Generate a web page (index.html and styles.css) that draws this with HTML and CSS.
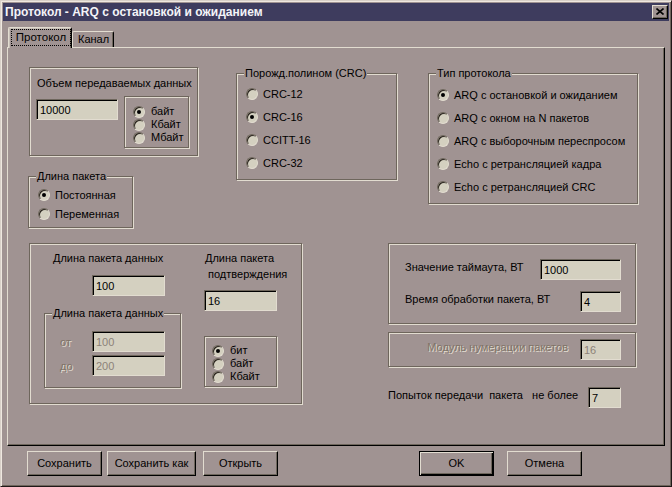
FILE: index.html
```html
<!DOCTYPE html>
<html>
<head>
<meta charset="utf-8">
<link rel="stylesheet" href="styles.css">
</head>
<body>
<div class="window">
  <div class="titlebar">
    <span class="title">Протокол - ARQ с остановкой и ожиданием</span>
    <span class="close"><svg width="8" height="7" viewBox="0 0 8 7"><path d="M0.5 0.5 L7.5 6.5 M7.5 0.5 L0.5 6.5" stroke="#000" stroke-width="1.6" fill="none"/></svg></span>
  </div>
  <div class="tabs">
    <div class="tab active"><span class="focus">Протокол</span></div>
    <div class="tab">Канал</div>
  </div>
  <div class="panel">
    <div class="row1">
      <div class="colA">
        <div class="group g1">
          <div class="g1-label">Объем передаваемых данных</div>
          <div class="g1-row">
            <div class="field f-vol">10000</div>
            <div class="group rbox rb1">
              <div class="rrow"><span class="radio on"></span><span>байт</span></div>
              <div class="rrow"><span class="radio"></span><span>Кбайт</span></div>
              <div class="rrow"><span class="radio"></span><span>Мбайт</span></div>
            </div>
          </div>
        </div>
        <div class="group g2">
          <span class="legend">Длина пакета</span>
          <div class="opt o19"><span class="radio on"></span><span>Постоянная</span></div>
          <div class="opt o19"><span class="radio"></span><span>Переменная</span></div>
        </div>
      </div>
      <div class="group g3">
        <span class="legend">Порожд.полином (CRC)</span>
        <div class="opt o23"><span class="radio"></span><span>CRC-12</span></div>
        <div class="opt o23"><span class="radio on"></span><span>CRC-16</span></div>
        <div class="opt o23"><span class="radio"></span><span>CCITT-16</span></div>
        <div class="opt o23"><span class="radio"></span><span>CRC-32</span></div>
      </div>
      <div class="group g4">
        <span class="legend">Тип протокола</span>
        <div class="opt o23"><span class="radio on"></span><span>ARQ с остановкой и ожиданием</span></div>
        <div class="opt o23"><span class="radio"></span><span>ARQ с окном на N пакетов</span></div>
        <div class="opt o23"><span class="radio"></span><span>ARQ с выборочным переспросом</span></div>
        <div class="opt o23"><span class="radio"></span><span>Echo с ретрансляцией кадра</span></div>
        <div class="opt o23"><span class="radio"></span><span>Echo с ретрансляцией CRC</span></div>
      </div>
    </div>
    <div class="row2">
      <div class="group g5">
        <div class="g5-left">
          <div class="g5-label">Длина пакета данных</div>
          <div class="field f-len">100</div>
          <div class="group g5-inner">
            <span class="legend">Длина пакета данных</span>
            <div class="range-row r-first"><span class="dis-label">от</span><div class="field f-len dis">100</div></div>
            <div class="range-row r-second"><span class="dis-label">до</span><div class="field f-len dis">200</div></div>
          </div>
        </div>
        <div class="g5-right">
          <div class="ack1">Длина пакета</div>
          <div class="ack2">подтверждения</div>
          <div class="field f-ack">16</div>
          <div class="group rbox rb2">
            <div class="rrow"><span class="radio on"></span><span>бит</span></div>
            <div class="rrow"><span class="radio"></span><span>байт</span></div>
            <div class="rrow"><span class="radio"></span><span>Кбайт</span></div>
          </div>
        </div>
      </div>
      <div class="colR">
        <div class="group g6">
          <div class="frow fr1"><span class="flabel">Значение таймаута, ВТ</span><div class="field f-timeout">1000</div></div>
          <div class="frow fr2"><span class="flabel">Время обработки пакета, ВТ</span><div class="field f-small">4</div></div>
        </div>
        <div class="group g7">
          <div class="frow fr3"><span class="flabel dis-text">Модуль нумерации пакетов</span><div class="field f-small dis">16</div></div>
        </div>
        <div class="frow fr4"><span class="flabel plain">Попыток передачи&nbsp; пакета &nbsp;&nbsp;не более</span><div class="field f-tries">7</div></div>
      </div>
    </div>
  </div>
  <div class="buttons">
    <div class="btn b-save">Сохранить</div>
    <div class="btn b-saveas">Сохранить как</div>
    <div class="btn b-open">Открыть</div>
    <div class="btn default b-ok">OK</div>
    <div class="btn b-cancel">Отмена</div>
  </div>
</div>
</body>
</html>
```
FILE: styles.css
```css
:root {
  --bg: #a09392;
  --light: #e2dcd0;
  --dark: #6e665c;
  --field: #d4d0c0;
}
* { box-sizing: border-box; }
html, body { margin: 0; padding: 0; background: var(--bg); }
body {
  font-family: "Liberation Sans", Arial, sans-serif;
  font-size: 11px;
  color: #000;
  width: 672px;
  height: 487px;
  overflow: hidden;
}
.window {
  width: 672px;
  height: 487px;
  background: var(--bg);
  border: 1px solid;
  border-color: #d8d0c8 #201818 #201818 #d8d0c8;
  box-shadow: inset 1px 1px 0 #efe8e0, inset -1px -1px 0 var(--dark);
  padding: 2px;
}
.titlebar {
  height: 18px;
  background: #3e3c5e;
  display: flex;
  align-items: flex-start;
  justify-content: space-between;
}
.title {
  color: #f4f4f8;
  font-weight: bold;
  font-size: 12px;
  line-height: 18px;
  padding-left: 2px;
}
.close {
  width: 16px;
  height: 14px;
  margin-top: 2px;
  margin-right: 1px;
  background: var(--bg);
  border: 1px solid;
  border-color: var(--light) #000 #000 var(--light);
  box-shadow: inset -1px -1px 0 var(--dark);
  display: flex;
  align-items: center;
  justify-content: center;
}
.close svg { display: block; margin-left: -1px; margin-top: -1px; }
.tabs {
  height: 26px;
  display: flex;
  align-items: flex-end;
  padding-left: 5px;
  position: relative;
  z-index: 2;
}
.tab {
  height: 16px;
  width: 42px;
  border-top: 1px solid var(--light);
  border-left: 1px solid var(--light);
  border-right: 1px solid #000;
  box-shadow: inset -1px 0 0 var(--dark);
  border-radius: 2px 2px 0 0;
  line-height: 14px;
  padding-left: 5px;
  font-size: 11px;
  background: var(--bg);
}
.tab.active {
  height: 21px;
  width: 64px;
  margin-bottom: -1px;
  padding: 1px 0 0 2px;
  box-shadow: inset 1px 1px 0 #c8c0b8, inset -1px 0 0 var(--dark);
}
.focus {
  display: block;
  width: 60px;
  height: 17px;
  outline: 1px dotted #000;
  outline-offset: -1px;
  text-align: center;
  line-height: 16px;
  font-size: 11.5px;
}
.panel {
  margin-left: 4px;
  width: 658px;
  height: 399px;
  border: 1px solid;
  border-color: var(--light) #000 #000 var(--light);
  box-shadow: inset -1px -1px 0 var(--dark);
  padding-top: 19px;
  position: relative;
  z-index: 1;
}
.row1 {
  display: flex;
  align-items: flex-start;
  margin-left: 21px;
}
.colA { display: flex; flex-direction: column; align-items: flex-start; }
.group {
  position: relative;
  border: 1px solid var(--dark);
  box-shadow: inset 1px 1px 0 var(--light), 1px 1px 0 var(--light);
}
.legend {
  position: absolute;
  top: -8px;
  left: 7px;
  padding: 0 1px;
  line-height: 14px;
  background: var(--bg);
  white-space: nowrap;
}
.g1 { width: 169px; height: 89px; }
.g1-label { margin: 8px 0 0 7px; line-height: 14px; }
.g1-row { display: flex; align-items: flex-start; margin-top: 6px; margin-left: 6px; }
.f-vol { width: 82px; margin-top: 3px; }
.rbox { padding-left: 8px; }
.rb1 { width: 65px; height: 52px; margin-left: 6px; padding-top: 8px; }
.rrow { display: flex; align-items: center; height: 13px; gap: 6px; line-height: 13px; }
.g2 { width: 105px; height: 52px; margin-top: 20px; margin-left: -1px; padding: 8px 0 0 9px; }
.opt { display: flex; align-items: center; gap: 5px; }
.o19 { height: 19px; }
.o23 { height: 23px; }
.g3 { width: 161px; height: 107px; margin-left: 38px; margin-top: 6px; padding: 8px 0 0 9px; }
.g4 { width: 210px; height: 131px; margin-left: 31px; margin-top: 6px; padding: 9px 0 0 8px; }
.radio {
  flex: none;
  position: relative;
  width: 12px;
  height: 12px;
  border-radius: 50%;
  background: var(--field);
  border: 1px solid;
  border-color: var(--dark) var(--light) var(--light) var(--dark);
  box-shadow: inset 1px 1px 0 #2a241e;
}
.radio.on::after {
  content: "";
  position: absolute;
  left: 3px;
  top: 3px;
  width: 4px;
  height: 4px;
  border-radius: 50%;
  background: #000;
}
.field {
  height: 21px;
  background: var(--field);
  border: 1px solid;
  border-color: var(--dark) var(--light) var(--light) var(--dark);
  box-shadow: inset 1px 1px 0 #000;
  padding-left: 3px;
  padding-top: 1px;
  line-height: 18px;
  white-space: nowrap;
}
.field.dis { color: #8c8278; }
.row2 { display: flex; align-items: flex-start; margin-left: 21px; margin-top: 15px; }
.g5 { width: 273px; height: 161px; display: flex; align-items: flex-start; }
.g5-left { display: flex; flex-direction: column; align-items: flex-start; width: 151px; }
.g5-label { margin: 7px 0 0 23px; line-height: 14px; }
.f-len { width: 73px; }
.g5-left > .f-len { margin: 10px 0 0 62px; }
.g5-inner { width: 137px; height: 75px; margin: 17px 0 0 14px; }
.range-row { display: flex; align-items: center; }
.r-first { margin-top: 17px; }
.r-second { margin-top: 3px; }
.dis-label {
  width: 47px;
  padding-left: 15px;
  color: #807468;
  text-shadow: 1px 1px 0 var(--light);
}
.g5-right { margin-left: 23px; display: flex; flex-direction: column; align-items: flex-start; }
.ack1 { margin-top: 6px; margin-left: 1px; line-height: 16px; }
.ack2 { margin-left: 4px; line-height: 16px; }
.f-ack { width: 73px; margin-top: 8px; }
.rb2 { width: 73px; height: 51px; margin-top: 25px; padding-top: 7px; padding-left: 7px; }
.colR { margin-left: 86px; width: 248px; display: flex; flex-direction: column; }
.g6 { height: 81px; padding-top: 15px; }
.frow { display: flex; align-items: flex-start; }
.flabel { flex: 1; margin-top: 1px; line-height: 14px; white-space: nowrap; }
.g6 .flabel { padding-left: 16px; }
.fr2 { margin-top: 11px; }
.f-timeout { width: 81px; margin-right: 14px; }
.f-small { width: 41px; margin-right: 14px; }
.g7 { height: 35px; margin-top: 8px; padding-top: 6px; }
.dis-text { text-align: right; padding-right: 12px; color: #807468; text-shadow: 1px 1px 0 var(--light); }
.fr4 { margin-top: 20px; }
.f-tries { width: 33px; margin-right: 15px; }
.buttons { display: flex; margin-top: 5px; margin-left: 24px; }
.btn {
  height: 25px;
  width: 75px;
  border: 1px solid;
  border-color: var(--light) #000 #000 var(--light);
  box-shadow: inset -1px -1px 0 var(--dark);
  display: flex;
  align-items: center;
  justify-content: center;
  padding-bottom: 1px;
}
.btn.default {
  border-color: #000;
  box-shadow: inset 1px 1px 0 var(--light), inset -1px -1px 0 #000, inset -2px -2px 0 var(--dark);
}
.b-saveas { width: 89px; margin-left: 5px; }
.b-open { margin-left: 7px; }
.b-ok { margin-left: 141px; }
.b-cancel { margin-left: 13px; }
```
